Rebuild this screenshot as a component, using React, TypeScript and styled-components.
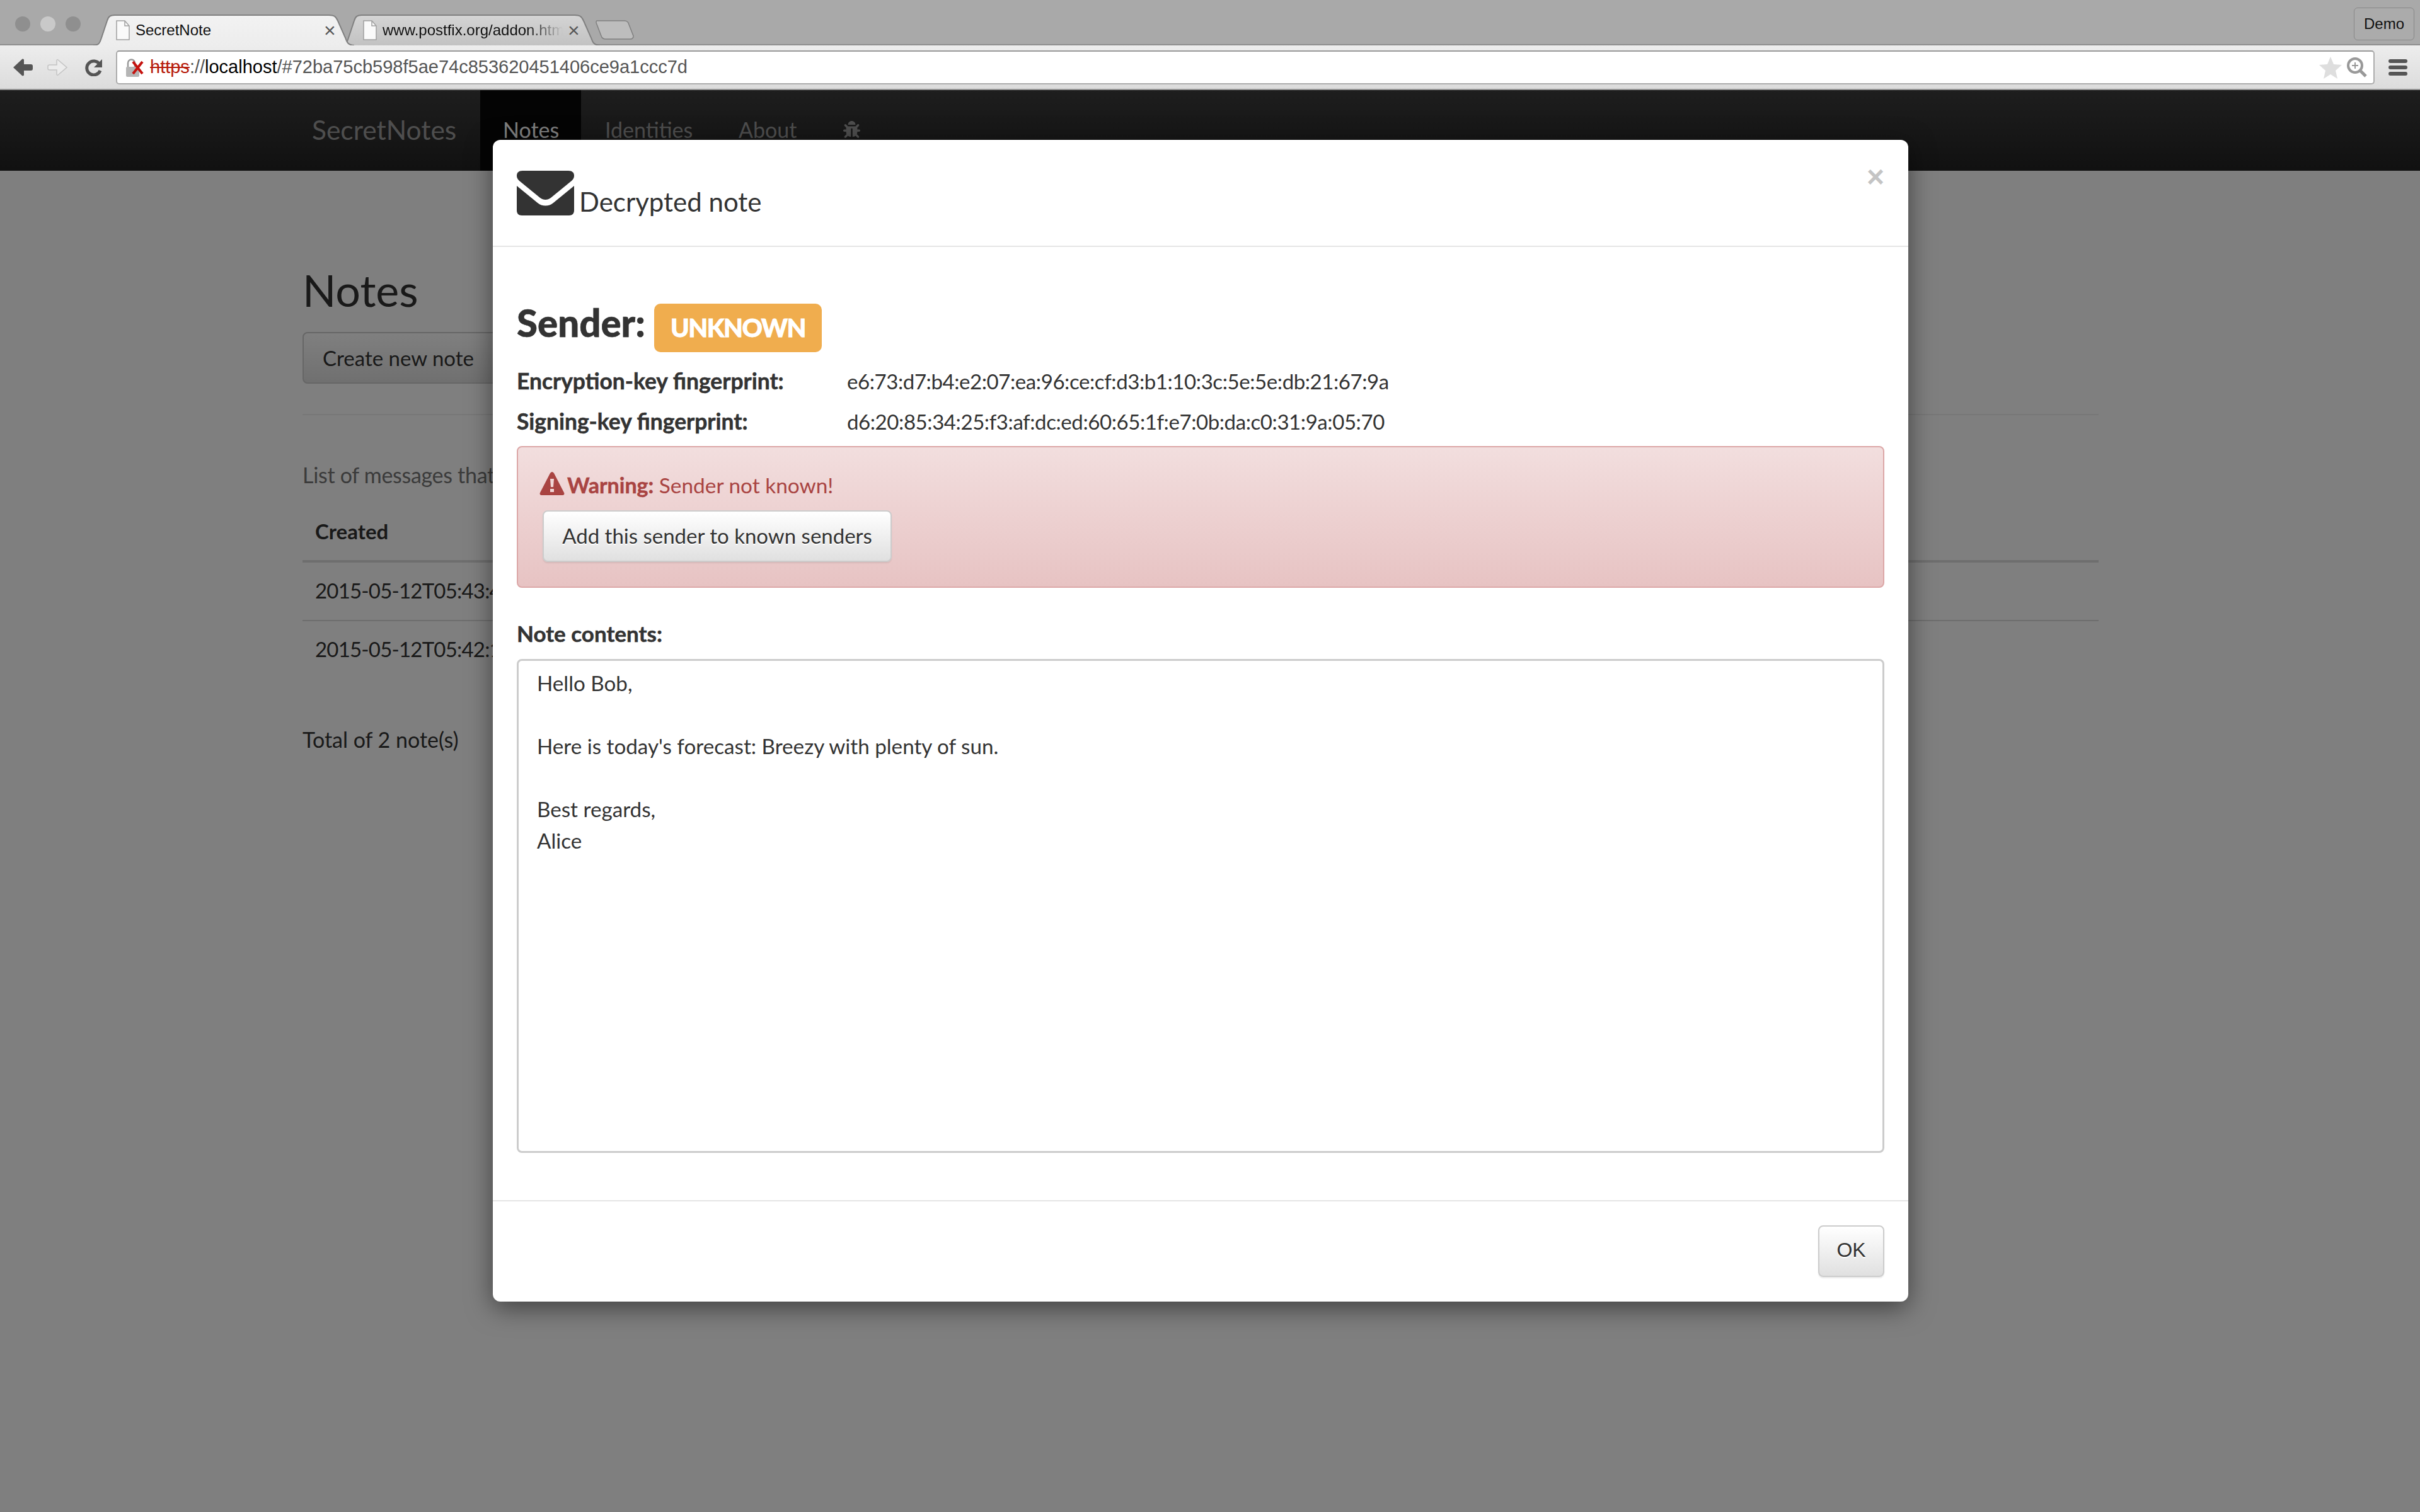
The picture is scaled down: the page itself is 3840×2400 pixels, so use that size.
import React from 'react';
import styled, { createGlobalStyle } from 'styled-components';
import { FaBug } from 'react-icons/fa';

const sans = `Lato, 'Noto Sans', sans-serif`;
const helvetica = `'Liberation Sans', Arial, sans-serif`;

const GlobalStyle = createGlobalStyle`
  html, body {
    margin: 0;
    padding: 0;
    background: #fff;
  }
  * {
    box-sizing: border-box;
  }
`;

const Screen = styled.div`
  position: relative;
  width: 3840px;
  height: 2400px;
  overflow: hidden;
  background: #fff;
  font-family: ${sans};
  color: #333;
`;

/* browser chrome */

const TabStrip = styled.div`
  height: 72px;
  background: #a9a9a9;
  display: flex;
  align-items: flex-end;
  position: relative;
  padding-left: 36px;
  border-bottom: 2px solid #8e8e8e;
`;

const TrafficLights = styled.div`
  display: flex;
  gap: 16px;
  align-self: flex-start;
  margin-top: 26px;
  width: 112px;
`;

const Light = styled.span<{ $light?: boolean }>`
  width: 24px;
  height: 24px;
  border-radius: 50%;
  background: ${(p) => (p.$light ? '#c9c9c9' : '#8f8f8f')};
  margin-left: -12px;
  margin-right: 12px;
`;

const Tab = styled.div<{ $active?: boolean; $w: number }>`
  position: relative;
  width: ${(p) => p.$w}px;
  height: 49px;
  margin-left: ${(p) => (p.$active ? '0' : '-22px')};
  margin-bottom: -2px;
  z-index: ${(p) => (p.$active ? 2 : 1)};
  display: flex;
  align-items: center;
  padding: 0 0 0 36px;
  font-family: ${helvetica};
  font-size: 24px;
  color: #111;
  flex: none;
`;

const TabShape = styled.svg`
  position: absolute;
  inset: 0;
  width: 100%;
  height: 100%;
`;

const TabFile = styled.svg`
  position: relative;
  width: 22px;
  height: 32px;
  margin-right: 9px;
  flex: none;
`;

const TabTitle = styled.span<{ $fade?: boolean; $w: number }>`
  position: relative;
  width: ${(p) => p.$w}px;
  overflow: hidden;
  white-space: nowrap;
  ${(p) => p.$fade && 'mask-image: linear-gradient(90deg, #000 80%, transparent);'}
`;

const TabClose = styled.span`
  position: relative;
  margin-left: 8px;
  font-size: 32px;
  color: #555;
  line-height: 1;
`;

const NewTab = styled.svg`
  width: 62px;
  height: 31px;
  margin-left: -7px;
  margin-bottom: 7px;
  position: relative;
  flex: none;
`;

const Spacer = styled.div`
  flex: 1;
`;

const ProfileButton = styled.div`
  align-self: flex-start;
  margin: 12px 9px 0 0;
  width: 96px;
  height: 52px;
  border: 1px solid #888;
  border-radius: 6px;
  display: flex;
  align-items: center;
  justify-content: center;
  font-family: ${helvetica};
  font-size: 24px;
  color: #111;
  background: #ababab;
`;

const Toolbar = styled.div`
  height: 71px;
  background: linear-gradient(#ededed, #dcdcdc);
  display: flex;
  align-items: center;
  padding: 0 20px;
  border-bottom: 2px solid #999;
`;

const NavIcon = styled.svg<{ $gap?: number }>`
  width: 32px;
  height: 28px;
  margin-right: 23px;
  margin-left: ${(p) => p.$gap ?? 0}px;
  flex: none;
`;

const UrlBar = styled.div`
  width: 3584px;
  height: 54px;
  margin: 0 0 0 -5px;
  background: #fff;
  border: 2px solid #adadad;
  border-top-color: #9a9a9a;
  border-radius: 5px;
  display: flex;
  align-items: center;
  padding: 0 10px 0 13px;
  font-family: ${helvetica};
  font-size: 29px;
  color: #555;
`;

const LockIcon = styled.svg`
  width: 29px;
  height: 30px;
  margin-right: 10px;
  flex: none;
`;

const Scheme = styled.span`
  color: #b71c0c;
  text-decoration: line-through;
`;

const Host = styled.span`
  color: #000;
`;

const UrlActions = styled.div`
  margin-left: auto;
  display: flex;
  align-items: center;
  gap: 8px;
`;

const Hamburger = styled.div`
  margin-left: 22px;
  width: 30px;
  display: flex;
  flex-direction: column;
  gap: 4px;
`;

const HamburgerBar = styled.span`
  height: 6px;
  border-radius: 3px;
  background: #555;
`;

/* page behind the dialog */

const Navbar = styled.div`
  height: 128px;
  background: linear-gradient(#3c3c3c, #222);
  display: flex;
  padding-left: 495px;
  font-size: 34px;
  color: #9d9d9d;
`;

const Brand = styled.div`
  font-size: 42.5px;
  width: 267px;
  display: flex;
  align-items: center;
  padding-bottom: 4px;
`;

const NavItem = styled.div<{ $active?: boolean; $w: number }>`
  width: ${(p) => p.$w}px;
  padding: 42px 0 0 ${(p) => (p.$active ? '36px' : '38px')};
  background: ${(p) => (p.$active ? '#080808' : 'transparent')};
  color: ${(p) => (p.$active ? '#fff' : '#9d9d9d')};
`;

const Page = styled.div`
  width: 2850px;
  margin-left: 480px;
  font-size: 34px;
`;

const PageTitle = styled.h1`
  margin: 0;
  padding-top: 144px;
  height: 256px;
  font-size: 70px;
  font-weight: 400;
  line-height: 90px;
  color: #333;
`;

const CreateButton = styled.div`
  width: 330px;
  height: 82px;
  border: 2px solid #ccc;
  border-radius: 8px;
  background: linear-gradient(#fff, #e0e0e0);
  display: flex;
  align-items: center;
  padding-left: 30px;
  font-size: 33px;
`;

const Rule = styled.hr`
  margin: 48px 0 0;
  border: 0;
  border-top: 2px solid #eee;
`;

const Intro = styled.p`
  margin: 72px 0 22px;
  line-height: 46px;
  color: #777;
  letter-spacing: -0.3px;
`;

const Cell = styled.div<{ $head?: boolean; $h: number }>`
  height: ${(p) => p.$h}px;
  padding: 21px 0 0 20px;
  line-height: 46px;
  font-size: 33px;
  letter-spacing: ${(p) => (p.$head ? '0' : '-0.8px')};
  font-weight: ${(p) => (p.$head ? 700 : 400)};
  border-bottom: ${(p) => (p.$head ? '4px solid #ddd' : '2px solid #ddd')};
`;

const LastCell = styled(Cell)`
  border-bottom: 0;
`;

const Total = styled.p`
  margin: 72px 0 0;
  line-height: 46px;
`;

/* dialog */

const Backdrop = styled.div`
  position: absolute;
  inset: 143px 0 0;
  background: rgba(0, 0, 0, 0.5);
`;

const Modal = styled.div`
  width: 2246px;
  height: 1844px;
  margin: 79px 0 0 782px;
  background: #fff;
  border-radius: 12px;
  box-shadow: 0 10px 40px rgba(0, 0, 0, 0.5);
  display: flex;
  flex-direction: column;
`;

const ModalHeader = styled.div`
  height: 170px;
  padding: 49px 38px 0;
  border-bottom: 2px solid #e5e5e5;
  display: flex;
  align-items: flex-start;
  position: relative;
`;

const EnvelopeIcon = styled.svg`
  width: 91px;
  height: 71px;
  margin-right: 8px;
  flex: none;
`;

const ModalTitle = styled.div`
  font-size: 42px;
  line-height: 60px;
  margin-top: 19px;
`;

const CloseButton = styled.span`
  position: absolute;
  right: 38px;
  top: 35px;
  font-family: ${helvetica};
  font-size: 48px;
  font-weight: 700;
  color: #c4c4c4;
  line-height: 1;
`;

const ModalBody = styled.div`
  flex: 1;
  padding: 90px 38px 0;
  font-size: 34px;
`;

const SenderRow = styled.div`
  display: flex;
  align-items: flex-start;
  height: 77px;
`;

const SenderLabel = styled.div`
  font-size: 60px;
  font-weight: 900;
  line-height: 60px;
  width: 218px;
  -webkit-text-stroke: 0.6px currentColor;
`;

const Badge = styled.div`
  width: 266px;
  height: 77px;
  background: #f0ad4e;
  border-radius: 10px;
  color: #fff;
  font-size: 40px;
  font-weight: 900;
  letter-spacing: -1.5px;
  -webkit-text-stroke: 0.8px currentColor;
  padding-bottom: 2px;
  display: flex;
  align-items: center;
  justify-content: center;
`;

const FingerprintRow = styled.div<{ $top: number }>`
  display: grid;
  grid-template-columns: 524px 1fr;
  margin-top: ${(p) => p.$top}px;
  line-height: 46px;
`;

const Value = styled.span`
  font-size: 33px;
  letter-spacing: -0.42px;
`;

const Strong = styled.strong`
  font-weight: 700;
  font-size: 35.4px;
  -webkit-text-stroke: 0.5px currentColor;
`;

const Alert = styled.div`
  margin-top: 16px;
  height: 225px;
  border: 2px solid #dca7a7;
  border-radius: 8px;
  background: linear-gradient(#f2dede, #e7c3c3);
  color: #a94442;
  padding: 37px 34px 0;
`;

const AlertLine = styled.div`
  display: flex;
  align-items: flex-end;
  gap: 4px;
  height: 46px;
  line-height: 46px;
  font-size: 33.4px;
`;

const AlertStrong = styled(Strong)`
  font-size: 34px;
`;

const WarningIcon = styled.svg`
  width: 40px;
  height: 37px;
  margin-bottom: 7px;
  flex: none;
`;

const GreyButton = styled.div`
  display: flex;
  align-items: center;
  justify-content: center;
  height: 82px;
  border: 2px solid #ccc;
  border-radius: 8px;
  background: linear-gradient(#fff, #e0e0e0);
  box-shadow: 0 2px 2px rgba(0, 0, 0, 0.08);
  color: #333;
  text-shadow: 0 2px 0 #fff;
`;

const AddSenderButton = styled(GreyButton)`
  width: 554px;
  margin: 17px 0 0 5px;
  padding-bottom: 3px;
  font-size: 33px;
`;

const ContentsLabel = styled.div`
  margin-top: 49px;
  font-weight: 700;
  font-size: 35px;
  -webkit-text-stroke: 0.5px currentColor;
  line-height: 46px;
`;

const NoteBox = styled.div`
  margin-top: 18px;
  height: 784px;
  border: 3px solid #ccc;
  border-radius: 8px;
  padding: 10px 29px;
  line-height: 50px;
  font-size: 33.2px;
  white-space: pre-line;
`;

const ModalFooter = styled.div`
  height: 161px;
  border-top: 2px solid #e5e5e5;
  padding: 38px 38px 0;
  display: flex;
  justify-content: flex-end;
`;

const OkButton = styled(GreyButton)`
  width: 105px;
  padding-bottom: 3px;
  font-family: ${helvetica};
  font-size: 32px;
`;

const noteText = `Hello Bob,

Here is today's forecast: Breezy with plenty of sun.

Best regards,
Alice`;

const tabPath = (w: number, h: number) =>
  `M0 ${h} C10 ${h} 11 ${h - 6} 13 ${h - 12} L22 10 C24 3 27 1 34 1 L${w - 40} 1 C${w - 32} 1 ${w - 29} 3 ${w - 26} 10 L${w - 14} ${h - 12} C${w - 12} ${h - 6} ${w - 10} ${h} ${w} ${h}`;

const TabBackground = ({ w, active }: { w: number; active?: boolean }) => (
  <TabShape viewBox={`0 0 ${w} 49`}>
    <defs>
      <linearGradient id={`tab${w}`} x1="0" x2="0" y1="0" y2="1">
        <stop offset="0" stopColor={active ? '#f2f2f2' : '#d4d4d4'} />
        <stop offset="1" stopColor={active ? '#ededed' : '#c2c2c2'} />
      </linearGradient>
    </defs>
    <path d={`${tabPath(w, 49)} Z`} fill={`url(#tab${w})`} />
    <path d={tabPath(w, 49)} fill="none" stroke="#808080" strokeWidth="2" />
  </TabShape>
);

const FileGlyph = () => (
  <TabFile viewBox="0 0 22 32">
    <path d="M1 1h13l7 8v22H1z" fill="#fafafa" stroke="#a0a0a0" strokeWidth="1.5" />
    <path d="M14 1v8h7" fill="none" stroke="#a0a0a0" strokeWidth="1.5" />
  </TabFile>
);

export default function App() {
  return (
    <Screen>
      <GlobalStyle />
      <TabStrip>
        <TrafficLights>
          <Light />
          <Light $light />
          <Light />
        </TrafficLights>
        <Tab $active $w={414}>
          <TabBackground w={414} active />
          <FileGlyph />
          <TabTitle $w={291}>SecretNote</TabTitle>
          <TabClose>×</TabClose>
        </Tab>
        <Tab $w={412}>
          <TabBackground w={412} />
          <FileGlyph />
          <TabTitle $fade $w={286}>www.postfix.org/addon.html</TabTitle>
          <TabClose>×</TabClose>
        </Tab>
        <NewTab viewBox="0 0 62 31">
          <path d="M2 1h44c4 0 6 2 7 6l7 18c0 3-2 5-5 5H16c-4 0-6-2-7-5L1 4c0-2 0-3 1-3z" fill="#bdbdbd" stroke="#808080" strokeWidth="1.5" />
        </NewTab>
        <Spacer />
        <ProfileButton>Demo</ProfileButton>
      </TabStrip>
      <Toolbar>
        <NavIcon viewBox="0 0 32 28">
          <path d="M15 1L1 14l14 13c1 1 3 0 3-1v-7h11c2 0 3-1 3-3v-4c0-2-1-3-3-3H18V2c0-1-2-2-3-1z" fill="#555" />
        </NavIcon>
        <NavIcon viewBox="0 0 32 28">
          <path d="M17 2l14 12-14 12c-1 1-2 0-2-1v-7H4c-2 0-3-1-3-2v-4c0-1 1-2 3-2h11V3c0-1 1-2 2-1z" fill="#ececec" stroke="#c4c4c4" strokeWidth="1.5" />
        </NavIcon>
        <NavIcon viewBox="0 0 32 28" $gap={4}>
          <path d="M24 9a11 11 0 1 0 1 10" fill="none" stroke="#555" strokeWidth="5" />
          <path d="M28 1v13H15z" fill="#555" />
        </NavIcon>
        <UrlBar>
          <LockIcon viewBox="0 0 29 30">
            <path d="M4 15V8a5.5 5.5 0 0 1 11 0v7" fill="none" stroke="#999" strokeWidth="2.5" />
            <rect x="1" y="14" width="21" height="16" rx="2" fill="#b5b5b5" />
            <path d="M12 6l15 19M27 6L12 25" stroke="#c5130f" strokeWidth="4" />
          </LockIcon>
          <Scheme>https</Scheme>://<Host>localhost</Host>/#72ba75cb598f5ae74c853620451406ce9a1ccc7d
          <UrlActions>
            <svg width="36" height="36" viewBox="0 0 36 36">
              <path d="M18 1l5 12 13 1-10 9 3 13-11-7-11 7 3-13L0 14l13-1z" fill="#dedede" />
            </svg>
            <svg width="32" height="32" viewBox="0 0 32 32">
              <circle cx="13" cy="13" r="11" fill="none" stroke="#999" strokeWidth="4" />
              <path d="M21 21l9 9" stroke="#999" strokeWidth="5" />
              <path d="M13 8v10M8 13h10" stroke="#999" strokeWidth="2" />
            </svg>
          </UrlActions>
        </UrlBar>
        <Hamburger>
          <HamburgerBar />
          <HamburgerBar />
          <HamburgerBar />
        </Hamburger>
      </Toolbar>
      <Navbar>
        <Brand>SecretNotes</Brand>
        <NavItem $active $w={160}>Notes</NavItem>
        <NavItem $w={212}>Identities</NavItem>
        <NavItem $w={166}>About</NavItem>
        <NavItem $w={100}>
          <FaBug size={27} />
        </NavItem>
      </Navbar>
      <Page>
        <PageTitle>Notes</PageTitle>
        <CreateButton>Create new note</CreateButton>
        <Rule />
        <Intro>List of messages that have been received</Intro>
        <Cell $head $h={94}>Created</Cell>
        <Cell $h={93}>2015-05-12T05:43:42</Cell>
        <LastCell $h={93}>2015-05-12T05:42:13</LastCell>
        <Total>Total of 2 note(s)</Total>
      </Page>
      <Backdrop>
        <Modal>
          <ModalHeader>
            <EnvelopeIcon viewBox="0 0 91 71">
              <path d="M9 0h73c6 0 9 3 9 8 0 3-1 5-4 8L54 43c-5 4-12 4-17 0L4 16C1 13 0 11 0 8c0-5 3-8 9-8z" fill="#333" />
              <path d="M0 24l33 27c7 6 18 6 25 0l33-27v39c0 5-3 8-8 8H8c-5 0-8-3-8-8z" fill="#333" />
            </EnvelopeIcon>
            <ModalTitle>Decrypted note</ModalTitle>
            <CloseButton>×</CloseButton>
          </ModalHeader>
          <ModalBody>
            <SenderRow>
              <SenderLabel>Sender:</SenderLabel>
              <Badge>UNKNOWN</Badge>
            </SenderRow>
            <FingerprintRow $top={23}>
              <Strong>Encryption-key fingerprint:</Strong>
              <Value>e6:73:d7:b4:e2:07:ea:96:ce:cf:d3:b1:10:3c:5e:5e:db:21:67:9a</Value>
            </FingerprintRow>
            <FingerprintRow $top={18}>
              <Strong>Signing-key fingerprint:</Strong>
              <Value>d6:20:85:34:25:f3:af:dc:ed:60:65:1f:e7:0b:da:c0:31:9a:05:70</Value>
            </FingerprintRow>
            <Alert>
              <AlertLine>
                <WarningIcon viewBox="0 0 40 37">
                  <path d="M20 0c1 0 2 1 3 2l16 31c1 2 0 4-2 4H3c-2 0-3-2-2-4L17 2c1-1 2-2 3-2z" fill="#a94442" />
                  <path d="M17 11h6l-1 13h-4zM17 27h6v5h-6z" fill="#f0d6d6" />
                </WarningIcon>
                <span>
                  <AlertStrong>Warning:</AlertStrong> Sender not known!
                </span>
              </AlertLine>
              <AddSenderButton>Add this sender to known senders</AddSenderButton>
            </Alert>
            <ContentsLabel>Note contents:</ContentsLabel>
            <NoteBox>{noteText}</NoteBox>
          </ModalBody>
          <ModalFooter>
            <OkButton>OK</OkButton>
          </ModalFooter>
        </Modal>
      </Backdrop>
    </Screen>
  );
}
